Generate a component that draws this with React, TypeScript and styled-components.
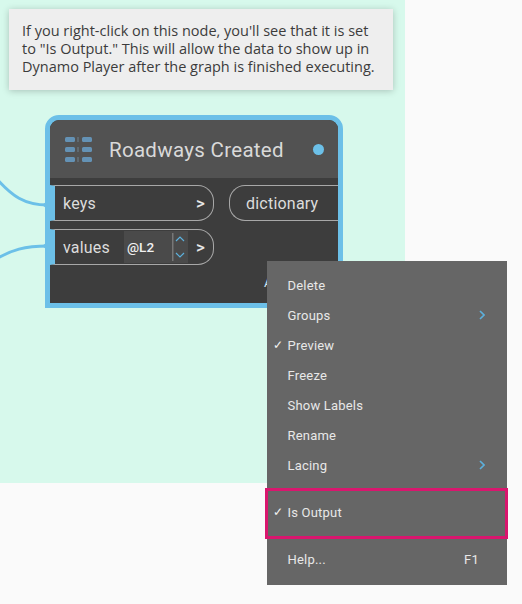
import React from "react";
import styled, { createGlobalStyle } from "styled-components";

const Global = createGlobalStyle`
  html, body { margin: 0; padding: 0; background: #fafafa; }
`;
const Page = styled.div`
  position: relative; width: 522px; height: 604px; overflow: hidden; background: #fafafa;
  font-family: Roboto, "Liberation Sans", sans-serif;
`;
const Canvas = styled.div`
  position: relative; width: 405px; height: 483px; background: #d7f9ec; padding: 9px; box-sizing: border-box;
`;
const Note = styled.div`
  position: relative; width: 384px; height: 81px; box-sizing: border-box; background: #eeeeee; color: #3c3c3c;
  padding: 13px 0 0 13px; font: 14.5px/18px "Open Sans", sans-serif; white-space: nowrap;
  box-shadow: 0 1px 7px rgba(0,0,0,.22);
`;
const Wires = styled.svg`
  position: absolute; left: 0; top: 0;
`;
const Node = styled.div`
  position: absolute; left: 45px; top: 115px; width: 298px; height: 193px; box-sizing: border-box;
  border: 5px solid #6cc0e8; border-radius: 14px 14px 0 0; background: #3d3d3d; overflow: hidden;
  display: flex; flex-direction: column;
`;
const Header = styled.div`
  height: 58px; flex: none; background: #525252; display: flex; align-items: center; padding: 0 15px;
`;
const Title = styled.div`
  margin-left: 17px; flex: 1; color: #d9d9d9; font-size: 20.5px; letter-spacing: .3px; padding-top: 1px;
`;
const Dot = styled.span`
  width: 11px; height: 11px; border-radius: 50%; background: #6cc0e8; margin-right: -1px;
`;
const Body = styled.div`
  display: grid; grid-template-columns: 164px 1fr; column-gap: 15px; padding-top: 7px;
`;
const Inputs = styled.div`
  display: flex; flex-direction: column; gap: 8px;
`;
const Port = styled.div`
  height: 36px; box-sizing: border-box; border: 1px solid #a8a8a8; border-left: 5px solid #6cc0e8;
  border-radius: 0 16px 16px 0; display: flex; align-items: center;
  padding-left: 8px; color: #dcdcdc; font-size: 16px; letter-spacing: .2px;
`;
const PortLabel = styled.span`
  flex: 1;
`;
const Arrow = styled.span`
  width: 17px; font-size: 17px; font-weight: 500; color: #e8e8e8;
`;
const Level = styled.div`
  width: 64px; height: 32px; background: #4a4a4a; display: flex; align-items: center; margin-right: 8px;
`;
const LevelText = styled.span`
  flex: 1; padding-left: 3px; color: #f0f0f0; font-size: 13.5px; font-weight: 500; letter-spacing: 0;
`;
const Spin = styled.svg`
  flex: none; display: block;
`;
const Output = styled.div`
  height: 36px; box-sizing: border-box; border: 1px solid #a8a8a8; border-right: 0; border-radius: 16px 0 0 16px;
  display: flex; align-items: center; padding-left: 16px; color: #dcdcdc; font-size: 16px; letter-spacing: .22px;
`;
const Footer = styled.div`
  flex: 1; display: flex; align-items: center; padding: 0 0 4px 214px; color: #cfe6f5; font-size: 13px;
`;
const Menu = styled.div`
  position: absolute; left: 267px; top: 261px; width: 240px; height: 324px; box-sizing: border-box;
  background: #666666; padding-top: 9px; color: #e8e8e8; font-size: 13px;
`;
const Item = styled.div<{ $gap?: number }>`
  position: relative; height: 30px; display: flex; align-items: center; padding: 0 29px 0 20.5px;
  margin-top: ${(p) => p.$gap ?? 0}px; letter-spacing: .2px;
`;
const Check = styled.span`
  position: absolute; left: 6px; font-size: 12px; font-weight: 500; color: #f2f2f2;
`;
const ItemLabel = styled.span`
  flex: 1;
`;
const Key = styled.span`
  margin-right: -1px;
`;
const Chevron = styled.svg`
  display: block; margin-right: -7px;
`;
const Highlight = styled.div`
  position: absolute; left: -2px; right: -1px; top: -9px; bottom: -12px; border: 3px solid #d9166e;
`;

const Rows = [0, 10, 20];
const NodeIcon = () => (
  <svg width="27" height="25" viewBox="0 0 27 25">
    {Rows.map((y) => (
      <g key={y} fill="#6492b5">
        <rect x="0" y={y} width="10" height="5" rx="1.5" />
        <rect x="12.5" y={y} width="1" height="5" fill="#6f8290" />
        <rect x="17" y={y} width="10" height="5" rx="1.5" />
      </g>
    ))}
  </svg>
);
const Sub = () => (
  <Chevron width="6" height="10" viewBox="0 0 6 10">
    <path d="M1 1l4 4-4 4" fill="none" stroke="#5cb0dc" strokeWidth="1.6" />
  </Chevron>
);

export default function App() {
  return (
    <Page>
      <Global />
      <Canvas>
        <Wires width="405" height="483">
          <path d="M-4 178C12 196 24 205 48 205" fill="none" stroke="#6cc0e8" strokeWidth="3" />
          <path d="M-4 259C12 250 24 246 48 246" fill="none" stroke="#6cc0e8" strokeWidth="3" />
          <path d="M42 205l8-6v12zM42 246l8-6v12z" fill="#6cc0e8" />
        </Wires>
        <Note>
          If you right-click on this node, you'll see that it is set<br />
          to "Is Output." This will allow the data to show up in<br />
          Dynamo Player after the graph is finished executing.
        </Note>
        <Node>
          <Header>
            <NodeIcon />
            <Title>Roadways Created</Title>
            <Dot />
          </Header>
          <Body>
            <Inputs>
              <Port>
                <PortLabel>keys</PortLabel>
                <Arrow>&gt;</Arrow>
              </Port>
              <Port>
                <PortLabel>values</PortLabel>
                <Level>
                  <LevelText>@L2</LevelText>
                  <Spin width="16" height="32" viewBox="0 0 16 32">
                    <rect x="0" y="2" width="1.5" height="28" fill="#777" />
                    <path d="M4 10l4-4 4 4M4 22l4 4 4-4" fill="none" stroke="#5cb0dc" strokeWidth="1.2" />
                  </Spin>
                </Level>
                <Arrow>&gt;</Arrow>
              </Port>
            </Inputs>
            <Output>dictionary</Output>
          </Body>
          <Footer>AUTO</Footer>
        </Node>
      </Canvas>
      <Menu>
        <Item><ItemLabel>Delete</ItemLabel></Item>
        <Item><ItemLabel>Groups</ItemLabel><Sub /></Item>
        <Item><Check>✓</Check><ItemLabel>Preview</ItemLabel></Item>
        <Item><ItemLabel>Freeze</ItemLabel></Item>
        <Item><ItemLabel>Show Labels</ItemLabel></Item>
        <Item><ItemLabel>Rename</ItemLabel></Item>
        <Item><ItemLabel>Lacing</ItemLabel><Sub /></Item>
        <Item $gap={17}>
          <Check>✓</Check><ItemLabel>Is Output</ItemLabel>
          <Highlight />
        </Item>
        <Item $gap={17}><ItemLabel>Help...</ItemLabel><Key>F1</Key></Item>
      </Menu>
    </Page>
  );
}
